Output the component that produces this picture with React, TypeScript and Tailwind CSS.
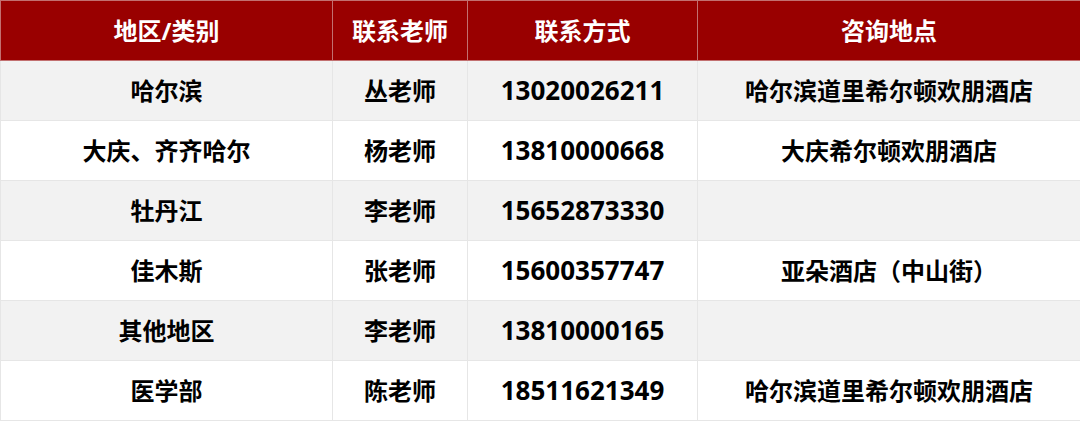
const rows = [
  { area: "哈尔滨", teacher: "丛老师", phone: "13020026211", place: "哈尔滨道里希尔顿欢朋酒店" },
  { area: "大庆、齐齐哈尔", teacher: "杨老师", phone: "13810000668", place: "大庆希尔顿欢朋酒店" },
  { area: "牡丹江", teacher: "李老师", phone: "15652873330", place: "" },
  { area: "佳木斯", teacher: "张老师", phone: "15600357747", place: "亚朵酒店（中山街）" },
  { area: "其他地区", teacher: "李老师", phone: "13810000165", place: "" },
  { area: "医学部", teacher: "陈老师", phone: "18511621349", place: "哈尔滨道里希尔顿欢朋酒店" },
];

const headers = ["地区/类别", "联系老师", "联系方式", "咨询地点"];

export default function App() {
  return (
    <div className="w-[1080px] h-[421px] bg-white overflow-hidden font-['Open_Sans','Noto_Sans_CJK_SC',sans-serif]">
      <table className="w-[1080px] table-fixed border-collapse">
        <colgroup>
          <col className="w-[332px]" />
          <col className="w-[135px]" />
          <col className="w-[230px]" />
          <col className="w-[383px]" />
        </colgroup>
        <thead>
          <tr className="bg-[#990000]">
            {headers.map((h) => (
              <th
                key={h}
                className="h-[60px] border border-[#c27070] text-center text-[24px] font-bold text-white p-0"
              >
                {h}
              </th>
            ))}
          </tr>
        </thead>
        <tbody>
          {rows.map((r, i) => (
            <tr key={r.phone} className={i % 2 === 0 ? "bg-[#f2f2f2]" : "bg-white"}>
              <td className="h-[60px] border border-[#e6e6e6] text-center text-[24px] font-bold text-black p-0">
                {r.area}
              </td>
              <td className="h-[60px] border border-[#e6e6e6] text-center text-[24px] font-bold text-black p-0">
                {r.teacher}
              </td>
              <td className="h-[60px] border border-[#e6e6e6] text-center text-[26px] font-bold text-black p-0">
                {r.phone}
              </td>
              <td className="h-[60px] border border-[#e6e6e6] text-center text-[24px] font-bold text-black p-0">
                {r.place}
              </td>
            </tr>
          ))}
        </tbody>
      </table>
    </div>
  );
}
